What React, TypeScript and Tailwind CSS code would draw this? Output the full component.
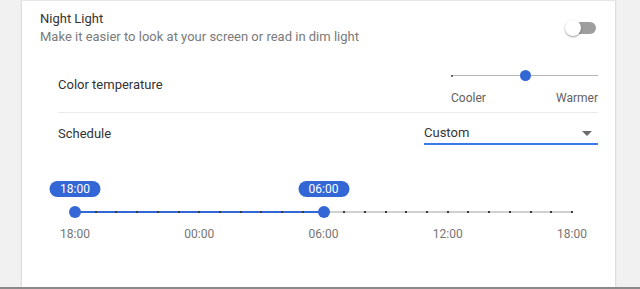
import React from "react";

const hours = Array.from({ length: 25 }, (_, i) => i);

function Toggle() {
  return (
    <div className="relative h-[12px] w-[28px] rounded-full bg-[#9e9e9e]">
      <div className="absolute -left-[3px] -top-[2px] h-[16px] w-[16px] rounded-full bg-white shadow-[0_1px_2px_rgba(0,0,0,0.4)]" />
    </div>
  );
}

function TempSlider() {
  return (
    <div className="w-[147px]">
      <div className="relative h-[12px]">
        <div className="absolute left-0 right-0 top-[5px] h-[1px] bg-[#b5b5b5]" />
        <div className="absolute left-0 top-[5px] h-[2px] w-[2px] rounded-full bg-[#444]" />
        <div className="absolute left-[69px] top-0 h-[11px] w-[11px] rounded-full bg-[#3367d6]" />
      </div>
      <div className="mt-[8px] flex justify-between text-[12px] leading-[16px] text-[#616161]">
        <span>Cooler</span>
        <span>Warmer</span>
      </div>
    </div>
  );
}

function Timeline() {
  const W = 497;
  const start = 0;
  const end = 12;
  const pos = (h: number) => (h / 24) * W;
  const labels = [
    { h: 0, t: "18:00" },
    { h: 6, t: "00:00" },
    { h: 12, t: "06:00" },
    { h: 18, t: "12:00" },
    { h: 24, t: "18:00" },
  ];
  return (
    <div className="ml-[53px] w-[497px]">
      <div className="relative h-[16px]">
        {[start, end].map((h, i) => (
          <div
            key={i}
            className="absolute top-0 flex h-[16px] w-[51px] -translate-x-1/2 items-center justify-center rounded-full bg-[#3367d6] text-[12px] leading-[16px] text-white"
            style={{ left: pos(h) }}
          >
            {h === 0 ? "18:00" : "06:00"}
          </div>
        ))}
      </div>
      <div className="relative mt-[9px] h-[12px]">
        <div className="absolute left-0 right-0 top-[5px] h-[2px] bg-[#d0d0d0]" />
        <div
          className="absolute left-0 top-[5px] h-[2px] bg-[#3367d6]"
          style={{ width: pos(end) }}
        />
        {hours.map((h) => (
          <div
            key={h}
            className="absolute top-[5px] h-[2px] w-[2px] -translate-x-1/2 bg-[#3a3a3a]"
            style={{ left: pos(h) }}
          />
        ))}
        {[start, end].map((h, i) => (
          <div
            key={i}
            className="absolute top-0 h-[12px] w-[12px] -translate-x-1/2 rounded-full bg-[#3367d6]"
            style={{ left: pos(h) }}
          />
        ))}
      </div>
      <div className="relative mt-[8px] h-[16px] text-[12px] leading-[16px] text-[#757575]">
        {labels.map((l, i) => (
          <span
            key={i}
            className="absolute top-0 -translate-x-1/2"
            style={{ left: pos(l.h) }}
          >
            {l.t}
          </span>
        ))}
      </div>
    </div>
  );
}

export default function App() {
  return (
    <div
      className="flex h-[289px] w-[640px] flex-col bg-[#f1f1f1]"
      style={{ fontFamily: "Roboto, 'Liberation Sans', sans-serif" }}
    >
      <div className="flex flex-1">
        <div className="ml-[22px] w-[593px] border-t border-[#e6e6e6] bg-white shadow-[0_0_2px_rgba(0,0,0,0.25)]">
          <div className="flex items-center pl-[18px] pr-[19px] pt-[9px]">
            <div className="flex-1 text-[13px] leading-[18px]">
              <div className="text-[#333]">Night Light</div>
              <div className="text-[#7a7a7a]">
                Make it easier to look at your screen or read in dim light
              </div>
            </div>
            <Toggle />
          </div>
          <div className="ml-[36px] mr-[17px] mt-[10px]">
            <div className="flex h-[57px] items-start justify-between border-b border-[#ececec]">
              <div className="mt-[20px] text-[13px] leading-[18px] text-[#333]">
                Color temperature
              </div>
              <div className="mt-[14px]">
                <TempSlider />
              </div>
            </div>
            <div className="flex h-[38px] items-start justify-between">
              <div className="mt-[12px] text-[13px] leading-[18px] text-[#333]">
                Schedule
              </div>
              <div className="mt-[10px] flex h-[22px] w-[174px] items-center justify-between border-b-2 border-[#3b78e7] text-[13px] leading-[18px] text-[#333]">
                <span>Custom</span>
                <svg width="10" height="5" viewBox="0 0 10 5" className="mr-[6px]">
                  <path d="M0 0 L10 0 L5 5 Z" fill="#6b6b6b" />
                </svg>
              </div>
            </div>
          </div>
          <div className="mt-[30px]">
            <Timeline />
          </div>
        </div>
      </div>
      <div className="h-[2px] bg-[#8a8a8a]" />
    </div>
  );
}
